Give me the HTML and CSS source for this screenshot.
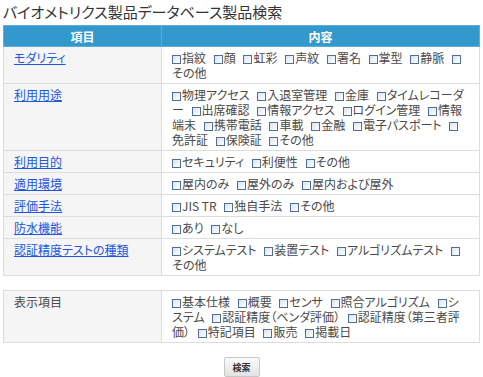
FILE: index.html
```html
<!DOCTYPE html>
<html lang="ja">
<head>
    <meta charset="UTF-8">
    <title>バイオメトリクス製品データベース製品検索</title>
    <link rel="stylesheet" href="styles.css">
</head>
<body>
    <h1 class="page-title">バイオメトリクス製品データベース製品検索</h1>

    <form class="search-form">
        <table class="search-table">
            <tr>
                <th class="col-item">項目</th>
                <th>内容</th>
            </tr>
            <tr>
                <td class="item"><a href="#">モダリティ</a></td>
                <td class="choices">
                    <label><input type="checkbox">指紋</label>
                    <label><input type="checkbox">顔</label>
                    <label><input type="checkbox">虹彩</label>
                    <label><input type="checkbox">声紋</label>
                    <label><input type="checkbox">署名</label>
                    <label><input type="checkbox">掌型</label>
                    <label><input type="checkbox">静脈</label>
                    <label><input type="checkbox">その他</label>
                </td>
            </tr>
            <tr>
                <td class="item"><a href="#">利用用途</a></td>
                <td class="choices">
                    <label><input type="checkbox">物理アクセス</label>
                    <label><input type="checkbox">入退室管理</label>
                    <label><input type="checkbox">金庫</label>
                    <label><input type="checkbox">タイムレコーダー</label>
                    <label><input type="checkbox">出席確認</label>
                    <label><input type="checkbox">情報アクセス</label>
                    <label><input type="checkbox">ログイン管理</label>
                    <label><input type="checkbox">情報端末</label>
                    <label><input type="checkbox">携帯電話</label>
                    <label><input type="checkbox">車載</label>
                    <label><input type="checkbox">金融</label>
                    <label><input type="checkbox">電子パスポート</label>
                    <label><input type="checkbox">免許証</label>
                    <label><input type="checkbox">保険証</label>
                    <label><input type="checkbox">その他</label>
                </td>
            </tr>
            <tr>
                <td class="item"><a href="#">利用目的</a></td>
                <td class="choices">
                    <label><input type="checkbox">セキュリティ</label>
                    <label><input type="checkbox">利便性</label>
                    <label><input type="checkbox">その他</label>
                </td>
            </tr>
            <tr>
                <td class="item"><a href="#">適用環境</a></td>
                <td class="choices">
                    <label><input type="checkbox">屋内のみ</label>
                    <label><input type="checkbox">屋外のみ</label>
                    <label><input type="checkbox">屋内および屋外</label>
                </td>
            </tr>
            <tr>
                <td class="item"><a href="#">評価手法</a></td>
                <td class="choices">
                    <label><input type="checkbox">JIS TR</label>
                    <label><input type="checkbox">独自手法</label>
                    <label><input type="checkbox">その他</label>
                </td>
            </tr>
            <tr>
                <td class="item"><a href="#">防水機能</a></td>
                <td class="choices">
                    <label><input type="checkbox">あり</label>
                    <label><input type="checkbox">なし</label>
                </td>
            </tr>
            <tr>
                <td class="item"><a href="#">認証精度テストの種類</a></td>
                <td class="choices">
                    <label><input type="checkbox">システムテスト</label>
                    <label><input type="checkbox">装置テスト</label>
                    <label><input type="checkbox">アルゴリズムテスト</label>
                    <label><input type="checkbox">その他</label>
                </td>
            </tr>
        </table>

        <table class="search-table display-table">
            <tr>
                <td class="item col-item">表示項目</td>
                <td class="choices">
                    <label><input type="checkbox">基本仕様</label>
                    <label><input type="checkbox">概要</label>
                    <label><input type="checkbox">センサ</label>
                    <label><input type="checkbox">照合アルゴリズム</label>
                    <label><input type="checkbox">システム</label>
                    <label><input type="checkbox">認証精度（ベンダ評価）</label>
                    <label><input type="checkbox">認証精度（第三者評価）</label>
                    <label><input type="checkbox">特記項目</label>
                    <label><input type="checkbox">販売</label>
                    <label><input type="checkbox">掲載日</label>
                </td>
            </tr>
        </table>

        <div class="actions">
            <button type="button" class="search-button">検索</button>
        </div>
    </form>
</body>
</html>
```

FILE: styles.css
```css
html, body {
    margin: 0;
    background-color: #ffffff;
}
body {
    padding: 3px;
    font-family: "Noto Sans CJK JP", "Liberation Sans", sans-serif;
    font-size: 12px;
    line-height: 15px;
    color: #4a4a4a;
    font-feature-settings: "palt";
}
.page-title {
    margin: 0 0 5px;
    font-size: 15px;
    line-height: 17px;
    font-weight: normal;
    color: #333333;
}
.search-table {
    width: 100%;
    border-collapse: collapse;
}
.search-table th {
    background-color: #3399cc;
    color: #ffffff;
    font-weight: bold;
    border: 1px solid #5aaed8;
    padding: 3px 10px 2px;
    text-align: center;
}
.search-table td {
    border: 1px solid #dddddd;
    padding: 3px 10px;
    vertical-align: top;
}
.col-item {
    width: 137px;
}
.item {
    background-color: #f5f5f5;
}
.item a {
    color: #2255dd;
    text-decoration: underline;
}
.choices {
    background-color: #ffffff;
}
.choices label {
    margin-right: 5px;
}
.choices input[type="checkbox"] {
    -webkit-appearance: none;
    appearance: none;
    width: 9px;
    height: 9px;
    margin: 0 1px 0 0;
    border: 1px solid #4f6f97;
    background: linear-gradient(135deg, #dde3ea, #ffffff);
    vertical-align: -1px;
}
.display-table {
    margin-top: 14px;
}
.actions {
    text-align: center;
    margin-top: 14px;
}
.search-button {
    width: 36px;
    height: 20px;
    padding: 0;
    font-family: "Noto Sans CJK JP", sans-serif;
    font-size: 9px;
    font-weight: bold;
    color: #333333;
    border: 1px solid #c8c8c8;
    border-radius: 2px;
    background: linear-gradient(#fbfbfb, #e2e2e2);
}
```
